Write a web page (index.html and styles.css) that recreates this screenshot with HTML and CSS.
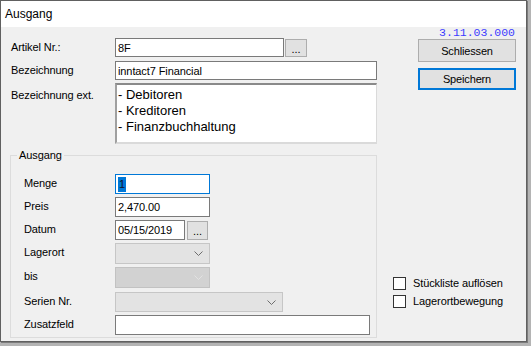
FILE: index.html
```html
<!DOCTYPE html>
<html>
<head>
<meta charset="utf-8">
<link rel="stylesheet" href="styles.css">
</head>
<body>
<div class="window">
  <div class="titlebar">Ausgang</div>
  <div class="client">
    <div class="main">
      <div class="top-form">
        <div class="row r1">
          <span class="lbl w104">Artikel Nr.:</span>
          <div class="input w169">8F</div>
          <div class="btn-dots">...</div>
        </div>
        <div class="row r2">
          <span class="lbl w104">Bezeichnung</span>
          <div class="input w262">inntact7 Financial</div>
        </div>
        <div class="row r3">
          <span class="lbl w104 lbl-top">Bezeichnung ext.</span>
          <div class="textarea">- Debitoren<br>- Kreditoren<br>- Finanzbuchhaltung</div>
        </div>
      </div>
      <fieldset class="group">
        <legend>Ausgang</legend>
        <div class="grow h20">
          <span class="lbl w91">Menge</span>
          <div class="input focus w95"><span class="sel">1</span></div>
        </div>
        <div class="grow h20 g3">
          <span class="lbl w91">Preis</span>
          <div class="input w95">2,470.00</div>
        </div>
        <div class="grow h20 g3">
          <span class="lbl w91">Datum</span>
          <div class="input w70">05/15/2019</div>
          <div class="btn-dots small">...</div>
        </div>
        <div class="grow h21 g3">
          <span class="lbl w91">Lagerort</span>
          <div class="combo w95"><svg width="9" height="5" viewBox="0 0 9 5"><path d="M0.5 0.5 L4.5 4.5 L8.5 0.5" fill="none" stroke="#6d6d6d" stroke-width="1"/></svg></div>
        </div>
        <div class="grow h21 g3">
          <span class="lbl w91">bis</span>
          <div class="combo dim w95"><svg width="9" height="5" viewBox="0 0 9 5"><path d="M0.5 0.5 L4.5 4.5 L8.5 0.5" fill="none" stroke="#e2e2e2" stroke-width="1"/></svg></div>
        </div>
        <div class="grow h20 g4">
          <span class="lbl w91">Serien Nr.</span>
          <div class="combo w168"><svg width="9" height="5" viewBox="0 0 9 5"><path d="M0.5 0.5 L4.5 4.5 L8.5 0.5" fill="none" stroke="#6d6d6d" stroke-width="1"/></svg></div>
        </div>
        <div class="grow h20 g3">
          <span class="lbl w91">Zusatzfeld</span>
          <div class="input w255"></div>
        </div>
      </fieldset>
    </div>
    <div class="side">
      <div class="version">3.11.03.000</div>
      <div class="button btn-close">Schliessen</div>
      <div class="button btn-save">Speichern</div>
      <div class="checks">
        <div class="check"><span class="box"></span><span class="lbl">Stückliste auflösen</span></div>
        <div class="check"><span class="box"></span><span class="lbl">Lagerortbewegung</span></div>
      </div>
    </div>
  </div>
</div>
</body>
</html>
```

FILE: styles.css
```css
html, body {
  margin: 0;
  padding: 0;
}
body {
  background: #b4b4b4;
  width: 531px;
  height: 346px;
  overflow: hidden;
  font-family: "Liberation Sans", Arial, sans-serif;
  font-size: 11px;
  color: #000;
}
.window {
  width: 527px;
  height: 342px;
  box-sizing: border-box;
  border: 1px solid #606060;
  box-shadow: 1px 1px 0 #7c7c7c;
  display: flex;
  flex-direction: column;
  background: #f0f0f0;
}
.titlebar {
  height: 26px;
  line-height: 26px;
  background: #fff;
  padding-left: 4px;
  font-size: 12px;
  flex: none;
}
.client {
  flex: 1;
  display: flex;
  gap: 16px;
  padding: 0 10px 0 9px;
  background: #f0f0f0;
}
.main {
  width: 367px;
  flex: none;
  display: flex;
  flex-direction: column;
}
.top-form {
  padding: 11px 0 0 1px;
  display: flex;
  flex-direction: column;
}
.row {
  display: flex;
  align-items: center;
}
.r1 { height: 19px; }
.r2 { height: 19px; margin-top: 4px; }
.r3 { align-items: flex-start; margin-top: 3px; }
.lbl {
  line-height: 13px;
  letter-spacing: -0.1px;
  white-space: nowrap;
}
.lbl-top { margin-top: 6px; }
.w104 { width: 104px; flex: none; }
.w91 { width: 91px; flex: none; margin-bottom: 2px; }
.w169 { width: 169px; }
.w262 { width: 262px; }
.w95 { width: 95px; }
.w70 { width: 70px; }
.w168 { width: 168px; }
.w255 { width: 255px; }

.input {
  box-sizing: border-box;
  height: 100%;
  background: #fff;
  border: 1px solid #7a7a7a;
  padding-left: 2px;
  display: flex;
  align-items: center;
  letter-spacing: -0.1px;
  white-space: nowrap;
  flex: none;
}
.input.focus {
  border-color: #0078d7;
}
.sel {
  background: #0078d7;
  color: #10102a;
  line-height: 15px;
  padding: 0 1px;
}
.btn-dots {
  box-sizing: border-box;
  width: 22px;
  height: 18px;
  margin-left: 1px;
  align-self: flex-end;
  background: #e1e1e1;
  border: 1px solid #adadad;
  text-align: center;
  line-height: 18px;
  flex: none;
}
.btn-dots.small {
  width: 21px;
  height: 19px;
  margin-left: 2px;
  line-height: 19px;
}
.textarea {
  box-sizing: border-box;
  width: 262px;
  height: 61px;
  background: #fff;
  border-style: solid;
  border-width: 2px 1px 2px 2px;
  border-color: #8a8a8a #dadada #dadada #a0a0a0;
  padding: 2px 0 0 1px;
  font-size: 13px;
  line-height: 16px;
}
.group {
  margin: 4px 0 0 0;
  width: 367px;
  box-sizing: border-box;
  border: 1px solid #dcdcdc;
  padding: 12px 0 2px 13px;
  min-width: 0;
}
.group legend {
  padding: 0 2px;
  margin-left: -7px;
  line-height: 14px;
  letter-spacing: -0.1px;
}
.grow {
  display: flex;
  align-items: center;
}
.h20 { height: 20px; }
.h21 { height: 21px; }
.g3 { margin-top: 3px; }
.g4 { margin-top: 4px; }
.combo {
  box-sizing: border-box;
  height: 100%;
  background: #e3e3e3;
  border: 1px solid #c6c6c6;
  display: flex;
  align-items: center;
  justify-content: flex-end;
  padding-right: 6px;
  flex: none;
}
.combo.dim {
  background: #d2d2d2;
  border-color: #c2c2c2;
}
.side {
  width: 123px;
  flex: none;
  display: flex;
  flex-direction: column;
}
.version {
  font-family: "Liberation Mono", "Courier New", monospace;
  font-size: 11.5px;
  line-height: 11px;
  color: #3c3cff;
  text-align: right;
  padding-right: 1px;
}
.button {
  box-sizing: border-box;
  width: 98px;
  margin-left: auto;
  background: #e1e1e1;
  border: 1px solid #adadad;
  display: flex;
  align-items: center;
  justify-content: center;
  letter-spacing: -0.15px;
}
.btn-close {
  height: 23px;
  margin-top: 1px;
}
.btn-save {
  height: 22px;
  margin-top: 6px;
  border: 2px solid #0078d7;
}
.checks {
  margin-top: 187px;
  display: flex;
  flex-direction: column;
  gap: 5px;
}
.check {
  display: flex;
  align-items: center;
  height: 13px;
  gap: 7px;
}
.box {
  box-sizing: border-box;
  width: 13px;
  height: 13px;
  border: 1px solid #333;
  background: #fff;
  flex: none;
}
```
